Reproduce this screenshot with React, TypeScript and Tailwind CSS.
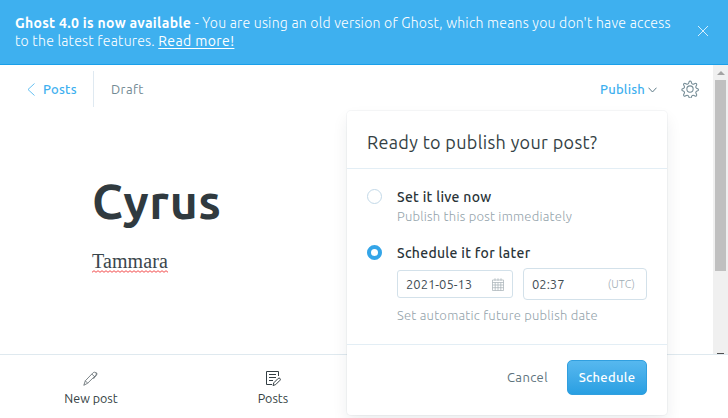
import type { ReactNode } from "react";

function Banner() {
  return (
    <header className="flex h-[65px] shrink-0 items-center border-b border-[#1a9fe9] bg-[#3eb0ef] pl-[15px] text-white">
      <div className="-mt-px flex-1 text-[14px] leading-[18px] font-light whitespace-nowrap">
        <p>
          <b className="font-bold tracking-[0.3px]">Ghost 4.0 is now available</b>
          <span className="tracking-[0.23px]"> - You are using an old version of Ghost, which means you don't have access</span>
        </p>
        <p>
          <span className="tracking-[0.23px]">to the latest features. </span>
          <a className="font-normal tracking-[0.4px] underline underline-offset-2">Read more!</a>
        </p>
      </div>
      <svg className="mt-[-2px] mr-[19px] size-[12px] shrink-0" viewBox="0 0 12 12" fill="none" stroke="#d5effd" strokeWidth="1">
        <path d="M1 1l10 10M11 1L1 11" />
      </svg>
    </header>
  );
}

function Gear() {
  return (
    <svg className="size-[18px]" viewBox="0 0 24 24" fill="none" stroke="#738a94" strokeWidth="1.4" strokeLinejoin="round">
      <circle cx="12" cy="12" r="4.200" />
      <path d="M13.600 2.300l.5 1.800a2.200 2.200 0 0 0 3.100 1.300l1.600-.8a1.500 1.500 0 0 1 2 2l-.8 1.600a2.200 2.200 0 0 0 1.300 3.100l1 .3a1.500 1.500 0 0 1 0 2.800l-1 .3a2.200 2.200 0 0 0-1.300 3.100l.8 1.600a1.500 1.500 0 0 1-2 2l-1.600-.8a2.200 2.200 0 0 0-3.100 1.300l-.5 1.500a1.500 1.500 0 0 1-2.800 0l-.5-1.500a2.200 2.200 0 0 0-3.100-1.300l-1.600.8a1.500 1.500 0 0 1-2-2l.8-1.600a2.200 2.200 0 0 0-1.300-3.100l-1-.3a1.500 1.500 0 0 1 0-2.800l1-.3a2.200 2.200 0 0 0 1.300-3.100l-.8-1.600a1.500 1.500 0 0 1 2-2l1.600.8a2.200 2.200 0 0 0 3.100-1.300l.5-1.800a1.500 1.500 0 0 1 2.800 0z" />
    </svg>
  );
}

function Toolbar() {
  return (
    <div className="mt-[6px] flex h-[36px] items-center text-[13px] whitespace-nowrap">
      <div className="flex h-full w-[94px] items-center border-r border-[#dfe9f1] pl-[27px] text-[#3eb0ef]">
        <svg className="mr-[8px] h-[13px] w-[8px]" viewBox="0 0 8 13" fill="none" stroke="#3eb0ef" strokeWidth="0.8">
          <path d="M7.500 .5L1 6.500l6.500 6" />
        </svg>
        <span className="pt-[2px] font-medium tracking-[0.25px]">Posts</span>
      </div>
      <span className="ml-[17px] pt-[2px] tracking-[0.4px] text-[#738a94]">Draft</span>
      <span className="ml-auto pt-[2px] font-medium tracking-[0.2px] text-[#3eb0ef]">Publish</span>
      <svg className="mt-px ml-[3px] h-[6px] w-[9px]" viewBox="0 0 9 6" fill="none" stroke="#5f7c89" strokeWidth="1">
        <path d="M.5 .700l4 4.300 4-4.300" />
      </svg>
      <div className="mr-[14px] ml-[24px]">
        <Gear />
      </div>
    </div>
  );
}

function Scrollbar() {
  return (
    <div className="flex w-[15px] shrink-0 flex-col items-center bg-[#f0f0f0]">
      <svg className="mt-[6px] h-[4px] w-[8px]" viewBox="0 0 8 4" fill="#a3a3a3">
        <path d="M4 0l4 4H0z" />
      </svg>
      <div className="mt-[5px] h-[191px] w-[11px] bg-[#c0c0c0]" />
      <div className="mt-auto h-px w-[7px] bg-[#505050]" />
    </div>
  );
}

function Option({ on, title, children }: { on?: boolean; title: ReactNode; children: ReactNode }) {
  return (
    <div className="flex">
      <div
        className={
          on
            ? "mt-[2px] size-[15px] shrink-0 rounded-full border-[4px] border-[#34a5e8] bg-white"
            : "mt-[2px] size-[15px] shrink-0 rounded-full border border-[#c3d9e8] bg-white"
        }
      />
      <div className="ml-[15px]">
        <div className="h-[19px] text-[14px] leading-[21px] font-medium tracking-[0.3px] whitespace-nowrap text-[#2a3438]">{title}</div>
        {children}
      </div>
    </div>
  );
}

function CalendarIcon() {
  return (
    <svg className="h-[13px] w-[12px]" viewBox="0 0 12 13" fill="none" stroke="#a5afb4" strokeWidth="0.7">
      <path d="M.5 2h11v10.500H.5zM.5 4.500h11M.5 7h11M.5 9.700h11M3.200 4.500v8M6 4.500v8M8.800 4.500v8M3 .3v2.500M9 .3v2.500M6 .3v2.500" />
    </svg>
  );
}

function PublishMenu() {
  return (
    <section className="absolute top-[111px] left-[347px] flex h-[304px] w-[320px] flex-col rounded-[4px] bg-white shadow-[0_0_0_1px_rgba(99,114,130,0.06),0_8px_16px_rgba(27,39,51,0.08)]">
      <h2 className="flex h-[58px] items-center border-b border-[#e3eef5] pt-[6px] pl-[20px] text-[18px] tracking-[0.33px] whitespace-nowrap text-[#343f44]">
        Ready to publish your post?
      </h2>
      <div className="flex h-[176px] flex-col border-b border-[#e3eef5] pt-[18px] pl-[20px]">
        <Option title="Set it live now">
          <p className="h-[37px] text-[13px] leading-[20px] font-light tracking-[0.23px] whitespace-nowrap text-[#94a3ab]">
            Publish this post immediately
          </p>
        </Option>
        <Option on title="Schedule it for later">
          <div className="mt-[6px] flex items-center text-[13px] text-[#3f4d54]">
            <div className="flex h-[28px] w-[116px] items-center justify-between rounded-[3px] border border-[#d3e1ea] pr-[8px] pl-[8px]">
              <span className="pt-[2px]">2021-05-13</span>
              <CalendarIcon />
            </div>
            <div className="ml-[10px] flex h-[32px] w-[124px] items-center justify-between rounded-[4px] border border-[#d3e1ea] pr-[11px] pl-[8px]">
              <span className="pt-[2px]">02:37</span>
              <span className="text-[11px] font-light tracking-[0.1px] text-[#9fadb5]">(UTC)</span>
            </div>
          </div>
          <p className="mt-[5px] text-[13px] leading-[20px] font-light tracking-[0.23px] whitespace-nowrap text-[#94a3ab]">
            Set automatic future publish date
          </p>
        </Option>
      </div>
      <div className="flex flex-1 items-center justify-end pr-[20px] pb-[5px] text-[13px]">
        <button className="mr-[19px] tracking-[0.4px] text-[#5c727c]">Cancel</button>
        <button className="h-[35px] w-[80px] rounded-[5px] border border-[#319fdf] bg-linear-to-b from-[#56b8ef] to-[#289fe2] font-medium tracking-[0.3px] text-white">
          Schedule
        </button>
      </div>
    </section>
  );
}

function BottomNav() {
  return (
    <nav className="flex h-[64px] shrink-0 border-t border-[#dfe9ef] bg-white text-[12.500px] text-[#343f44]">
      <div className="flex w-[182px] flex-col items-center pt-[16px]">
        <svg className="-ml-px size-[15px]" viewBox="0 0 15 15" fill="none" stroke="#5a6469" strokeWidth="0.8">
          <path d="M.8 14.300l1.500-4.500 7.600-7.900c1-.9 2.200-.9 2.900-.1s.6 1.800-.2 2.600L4.700 12.200zM2.300 9.800l2.400 2.400M8.800 3l2.600 2.600M12.600 1.600l1.300.5-.2 1.800-3.300 4" />
        </svg>
        <span className="mt-[4px] leading-[17px]">New post</span>
      </div>
      <div className="flex w-[182px] flex-col items-center pt-[16px]">
        <svg className="h-[15px] w-[15px]" viewBox="0 0 15 15" fill="none" stroke="#343f44" strokeWidth="1">
          <path d="M12.500 5V.5H.5v13h5.500M3 3.500h7M3 6.500h7M3 9.500h4" />
          <path d="M7 14.500l.8-2.700 4.400-4.400c1.300-1.100 2.900.6 1.900 1.800l-4.400 4.400z" />
        </svg>
        <span className="mt-[4px] leading-[17px]">Posts</span>
      </div>
    </nav>
  );
}

export default function App() {
  return (
    <div className="relative flex h-[418px] w-[728px] flex-col overflow-hidden bg-white font-['Ubuntu','Open_Sans','Noto_Sans',sans-serif]">
      <Banner />
      <main className="flex flex-1">
        <div className="flex-1">
          <Toolbar />
          <article className="pl-[92px]">
            <h1 className="mt-[63px] text-[48px] leading-[62px] font-bold tracking-[0.6px] text-[#303a3f]">Cyrus</h1>
            <p className="mt-[15px] font-['Liberation_Serif',serif] text-[20px] leading-[28px] text-[#3a464c]">
              <span className="relative inline-block tracking-[0.1px]">
                Tammara
                <svg className="absolute bottom-[2px] left-0 h-[3px] w-[76px]" viewBox="0 0 76 3" fill="none" stroke="#f03a3a" strokeWidth="0.9">
                  <path d="M0 2.300l2-1.600 2 1.600 2-1.600 2 1.600 2-1.600 2 1.600 2-1.600 2 1.600 2-1.600 2 1.600 2-1.600 2 1.600 2-1.600 2 1.600 2-1.600 2 1.600 2-1.600 2 1.600 2-1.600 2 1.600 2-1.600 2 1.600 2-1.600 2 1.600 2-1.600 2 1.600 2-1.600 2 1.600 2-1.600 2 1.600 2-1.600 2 1.600 2-1.600 2 1.600 2-1.600 2 1.600 2-1.600 2 1.600" />
                </svg>
              </span>
            </p>
          </article>
        </div>
        <Scrollbar />
      </main>
      <BottomNav />
      <PublishMenu />
    </div>
  );
}
